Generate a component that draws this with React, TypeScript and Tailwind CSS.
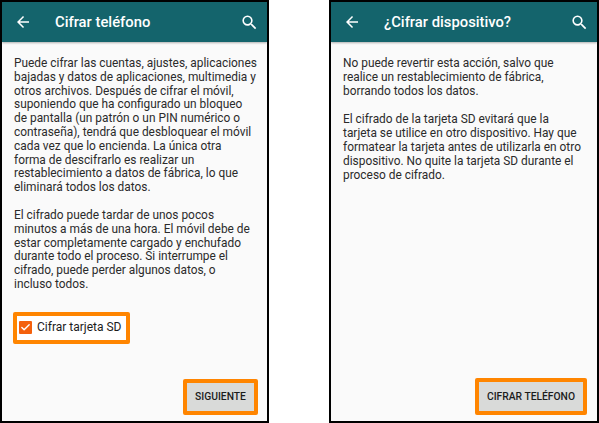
import { Check } from 'lucide-react'
import { MdArrowBack, MdSearch } from 'react-icons/md'

function Header({ title }: { title: string }) {
  return (
    <div className="flex items-center h-[40px] bg-[#14646c] text-white shadow-[0_1px_2px_rgba(0,0,0,0.3)] pl-[12px] pr-[8px] shrink-0">
      <MdArrowBack size={18} />
      <div className="ml-[23px] flex-1 text-[14.8px] font-medium">{title}</div>
      <MdSearch size={19} />
    </div>
  )
}

export default function App() {
  return (
    <div className="w-[599px] h-[423px] bg-white flex justify-between font-['Roboto',sans-serif]">
      {/* izquierda */}
      <div className="w-[269px] h-[423px] border-2 border-black bg-[#fafafa] flex flex-col">
        <Header title="Cifrar teléfono" />
        <div className="flex-1 min-h-0 flex flex-col pl-[12px] pr-[9px] pt-[15px] pb-[6px] text-[11.9px] leading-[13.8px] text-[#2b2b2b] whitespace-nowrap">
          <p>
            Puede cifrar las cuentas, ajustes, aplicaciones<br />
            bajadas y datos de aplicaciones, multimedia y<br />
            otros archivos. Después de cifrar el móvil,<br />
            suponiendo que ha configurado un bloqueo<br />
            de pantalla (un patrón o un PIN numérico o<br />
            contraseña), tendrá que desbloquear el móvil<br />
            cada vez que lo encienda. La única otra<br />
            forma de descifrarlo es realizar un<br />
            restablecimiento a datos de fábrica, lo que<br />
            eliminará todos los datos.
          </p>
          <p className="mt-[14px]">
            El cifrado puede tardar de unos pocos<br />
            minutos a más de una hora. El móvil debe de<br />
            estar completamente cargado y enchufado<br />
            durante todo el proceso. Si interrumpe el<br />
            cifrado, puede perder algunos datos, o<br />
            incluso todos.
          </p>
          <div className="mt-[20px] -ml-[1px] w-[117px] h-[32px] border-[4px] border-[#ff8500] rounded-[2px] bg-white flex items-center pl-[2px]">
            <span className="w-[13px] h-[13px] bg-[#f4600c] rounded-[1px] flex items-center justify-center text-white">
              <Check size={11} strokeWidth={3} />
            </span>
            <span className="ml-[5px] text-[12px] text-[#1c1c1c]">Cifrar tarjeta SD</span>
          </div>
          <button className="mt-auto self-end w-[75px] h-[36px] border-[4px] border-[#ff8500] rounded-[2px] bg-[#d9dad9] text-[10.3px] font-medium text-[#1c1c1c]">
            SIGUIENTE
          </button>
        </div>
      </div>

      {/* derecha */}
      <div className="w-[270px] h-[423px] border-2 border-black bg-[#fafafa] flex flex-col">
        <Header title="¿Cifrar dispositivo?" />
        <div className="flex-1 min-h-0 flex flex-col pl-[12px] pr-[10px] pt-[15px] pb-[6px] text-[11.9px] leading-[13.8px] text-[#2b2b2b] whitespace-nowrap">
          <p>
            No puede revertir esta acción, salvo que<br />
            realice un restablecimiento de fábrica,<br />
            borrando todos los datos.
          </p>
          <p className="mt-[15px]">
            El cifrado de la tarjeta SD evitará que la<br />
            tarjeta se utilice en otro dispositivo. Hay que<br />
            formatear la tarjeta antes de utilizarla en otro<br />
            dispositivo. No quite la tarjeta SD durante el<br />
            proceso de cifrado.
          </p>
          <button className="mt-auto self-end w-[112px] h-[37px] border-[4px] border-[#ff8500] rounded-[2px] bg-[#d9dad9] text-[10.3px] font-medium text-[#1c1c1c]">
            CIFRAR TELÉFONO
          </button>
        </div>
      </div>
    </div>
  )
}
